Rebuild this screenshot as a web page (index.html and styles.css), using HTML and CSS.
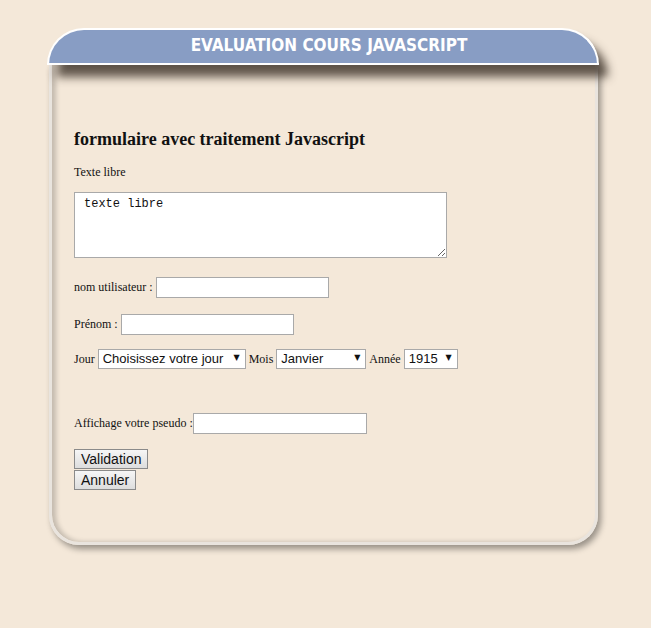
FILE: index.html
```html
<!DOCTYPE html>
<html lang="fr">
<head>
<meta charset="utf-8">
<title>Evaluation cours Javascript</title>
<link rel="stylesheet" href="styles.css">
</head>
<body>
<div class="wrap">
  <div class="header">EVALUATION COURS JAVASCRIPT</div>
  <div class="box">
    <h2 class="title">formulaire avec traitement Javascript</h2>
    <p class="lead">Texte libre</p>
    <textarea class="area">texte libre</textarea>
    <div class="row row-nom"><label>nom utilisateur :</label><input class="field" type="text"></div>
    <div class="row row-prenom"><label>Prénom :</label><input class="field" type="text"></div>
    <div class="row row-date">
      <label>Jour</label>
      <span class="sel sel-jour"><select><option>Choisissez votre jour</option></select></span>
      <label>Mois</label>
      <span class="sel sel-mois"><select><option>Janvier</option></select></span>
      <label>Année</label>
      <span class="sel sel-annee"><select><option>1915</option></select></span>
    </div>
    <div class="row row-pseudo"><label>Affichage votre pseudo :</label><input class="field field-pseudo" type="text"></div>
    <div class="buttons">
      <button class="btn" type="button">Validation</button>
      <button class="btn" type="button">Annuler</button>
    </div>
  </div>
</div>
</body>
</html>
```
FILE: styles.css
```css
html, body {
  margin: 0;
  padding: 0;
}
body {
  background: #f4e8d9;
  font-family: "Liberation Serif", "Times New Roman", serif;
  color: #111;
  height: 628px;
}
.wrap {
  margin: 28px 0 0 47px;
  width: 552px;
}
.header {
  position: relative;
  z-index: 1;
  height: 33px;
  line-height: 31px;
  padding-left: 12px;
  background: #889dc4;
  border: 2px solid #ffffff;
  border-radius: 38px 38px 0 0;
  color: #ffffff;
  text-align: center;
  font-family: "DejaVu Sans Condensed", "DejaVu Sans", sans-serif;
  font-weight: bold;
  font-size: 17px;
  box-shadow: 9px 12px 10px rgba(70, 60, 50, 0.85);
}
.box {
  margin: 0 1px 0 2px;
  height: 414px;
  padding: 63px 0 0 22px;
  border: 3px solid #e9e4de;
  border-top: none;
  border-radius: 0 0 30px 30px;
  box-shadow: 3px 4px 6px rgba(0, 0, 0, 0.38), inset 4px 0 5px rgba(0, 0, 0, 0.2);
}
.title {
  margin: 0;
  font-size: 18px;
  line-height: 22px;
  font-weight: bold;
}
.lead {
  margin: 15px 0 0;
  font-size: 12px;
  line-height: 14px;
}
.area {
  display: block;
  margin-top: 13px;
  box-sizing: border-box;
  width: 373px;
  height: 66px;
  padding: 4px 9px;
  border: 1px solid #a9a9a9;
  background: #fff;
  font-family: "Liberation Mono", "DejaVu Sans Mono", monospace;
  font-size: 12px;
  color: #111;
}
.row {
  display: flex;
  align-items: center;
  font-size: 12px;
}
.row label {
  margin-right: 3px;
}
.row-nom { margin-top: 19px; }
.row-prenom { margin-top: 16px; }
.row-date { margin-top: 14px; }
.row-pseudo { margin-top: 44px; }
.field {
  box-sizing: border-box;
  width: 173px;
  height: 21px;
  border: 1px solid #a9a9a9;
  background: #fff;
  padding: 0 2px;
  margin: 0;
}
.field-pseudo {
  margin-left: -3px;
  width: 174px;
}
.sel {
  position: relative;
  display: inline-block;
  margin-right: 3px;
}
.sel select {
  -webkit-appearance: none;
  appearance: none;
  box-sizing: border-box;
  height: 20px;
  border: 1px solid #a9a9a9;
  background: #fff;
  font-family: "Liberation Sans", Arial, sans-serif;
  font-size: 13px;
  color: #111;
  padding: 0 0 0 4px;
  margin: 0;
  border-radius: 0;
  line-height: 18px;
}
.sel::after {
  content: "\25BC";
  position: absolute;
  right: 6px;
  top: 4px;
  font-family: "DejaVu Sans", sans-serif;
  font-size: 8px;
  color: #111;
  pointer-events: none;
}
.sel-jour select { width: 148px; }
.sel-mois select { width: 90px; }
.sel-annee select { width: 54px; }
.buttons {
  margin-top: 15px;
  display: flex;
  flex-direction: column;
  align-items: flex-start;
  gap: 1px;
}
.btn {
  box-sizing: border-box;
  height: 20px;
  margin: 0;
  padding: 0 6px;
  border: 1px solid #8a8a8a;
  border-radius: 0;
  background: linear-gradient(#f6f6f6, #dddddd);
  font-family: "Liberation Sans", Arial, sans-serif;
  font-size: 14px;
  line-height: 18px;
  color: #111;
}
```
